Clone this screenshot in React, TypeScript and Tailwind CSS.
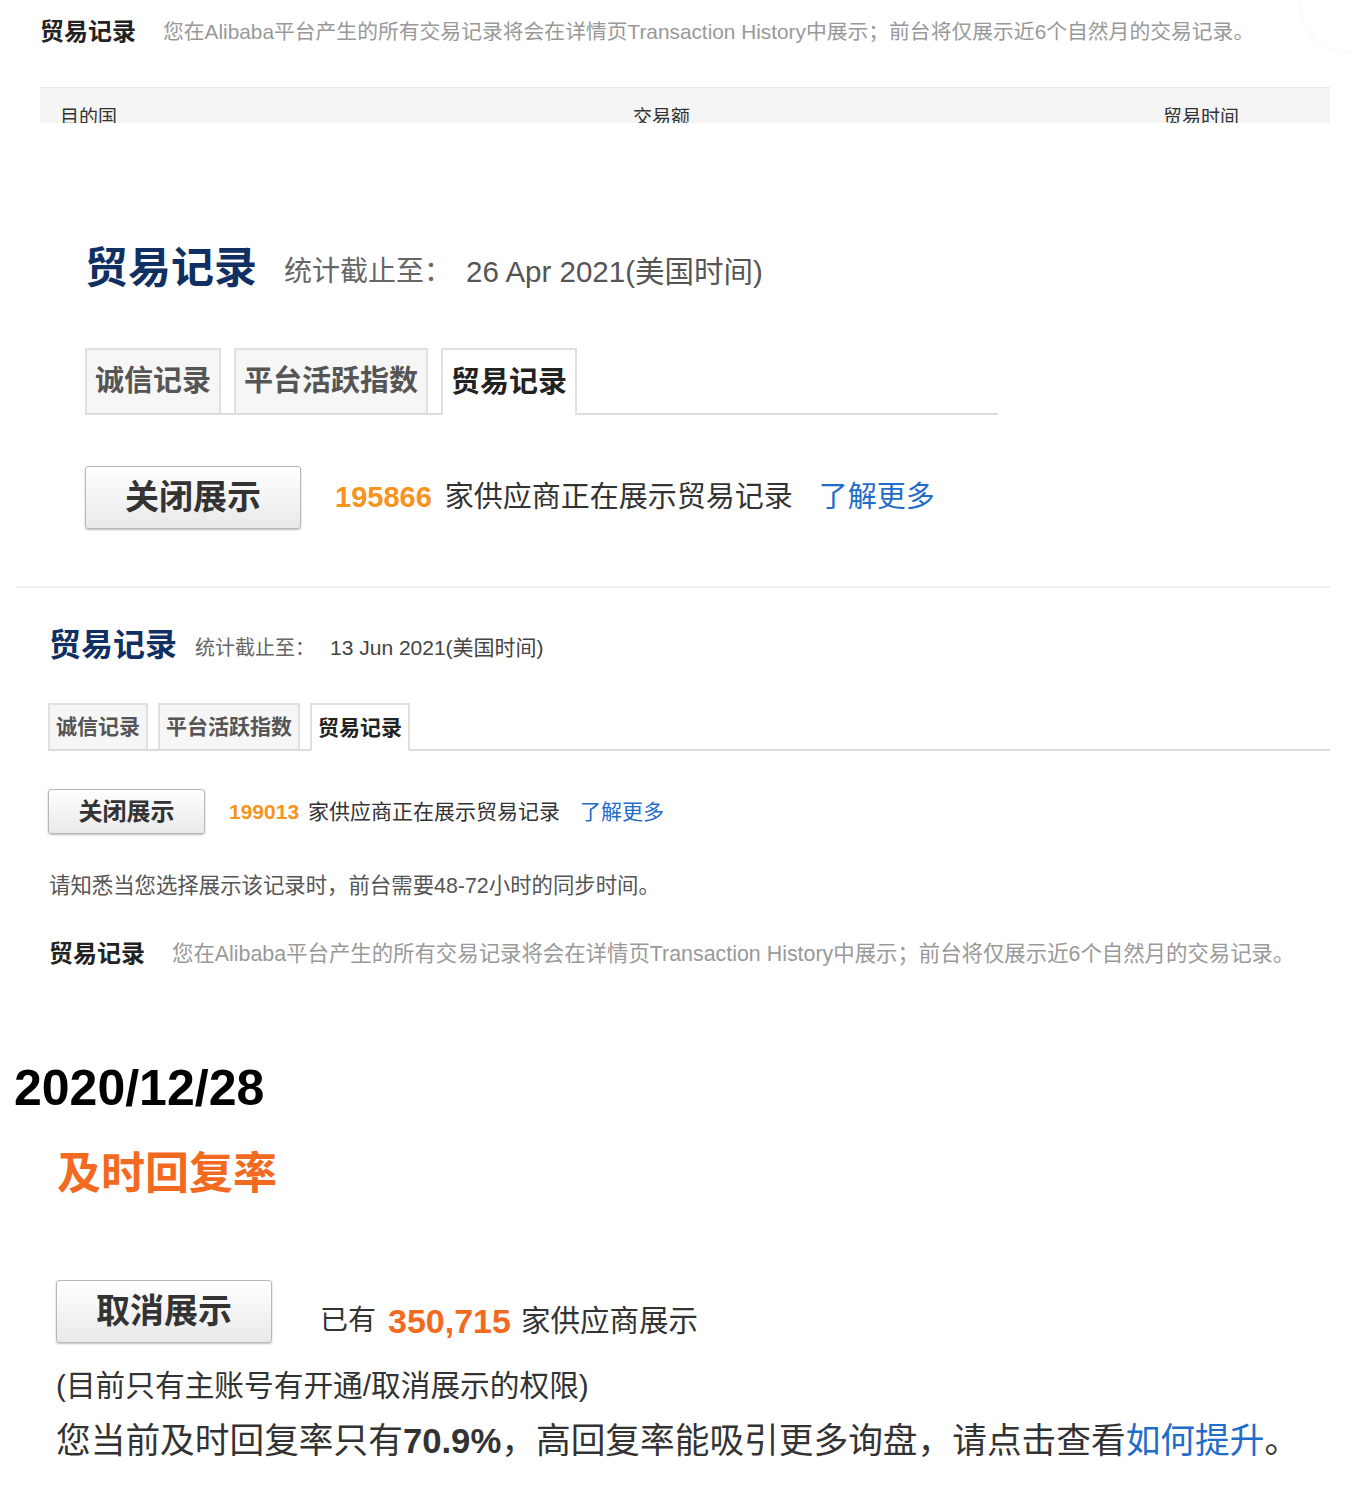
import React from "react";

const FONT = "font-['Liberation_Sans','Noto_Sans_CJK_SC',sans-serif]";

function Tabs({ big }: { big: boolean }) {
  const tabBase = big
    ? "h-[65px] px-[8px] text-[29px] border-2 border-b-0"
    : "h-[46px] px-[6px] text-[21px] border-2 border-b-0";
  return (
    <div
      className={`flex items-end border-b-2 border-[#dcdcdc] ${
        big ? "gap-[13px] w-[913px]" : "gap-[10px] w-[1282px]"
      }`}
    >
      <div className={`${tabBase} flex items-center bg-[#f6f6f6] border-[#e0e0e0] text-[#555] font-bold`}>诚信记录</div>
      <div className={`${tabBase} flex items-center bg-[#f6f6f6] border-[#e0e0e0] text-[#555] font-bold`}>平台活跃指数</div>
      <div
        className={`${tabBase} flex items-center bg-white border-[#e0e0e0] text-[#222] font-bold -mb-[2px] ${
          big ? "h-[67px]" : "h-[48px]"
        }`}
      >
        贸易记录
      </div>
    </div>
  );
}

function Btn({ label, big }: { label: string; big: boolean }) {
  return (
    <div
      className={`flex items-center justify-center rounded-[3px] border border-[#b8b8b8] bg-gradient-to-b from-white to-[#e9e9e9] shadow-[0_1px_2px_rgba(0,0,0,0.25)] font-bold text-[#333] ${
        big ? "w-[216px] h-[63px] text-[34px]" : "w-[157px] h-[45px] text-[24px]"
      }`}
    >
      {label}
    </div>
  );
}

export default function App() {
  return (
    <div className={`${FONT} relative min-h-[1491px] w-[1352px] bg-white overflow-hidden`}>
      <div className="absolute -right-[40px] -top-[40px] w-[90px] h-[90px] rounded-full bg-white shadow-[0_0_6px_rgba(0,0,0,0.05)]" />

      {/* Section 1 */}
      <div className="pl-[40px] pt-[17px]">
        <div className="flex items-center h-[30px]">
          <span className="text-[24px] font-bold text-[#222] leading-[30px]">贸易记录</span>
          <span className="ml-[27px] text-[20.8px] text-[#999] leading-[30px] whitespace-nowrap">
            您在Alibaba平台产生的所有交易记录将会在详情页Transaction History中展示；前台将仅展示近6个自然月的交易记录。
          </span>
        </div>
        <div className="mt-[40px] w-[1290px] h-[36px] overflow-hidden bg-[#f5f5f5] border-t border-[#ececec] flex text-[19px] text-[#333] leading-[20px] pt-[20px] pl-[20px]">
          <div className="w-[573px]">目的国</div>
          <div className="w-[530px]">交易额</div>
          <div>贸易时间</div>
        </div>
      </div>

      {/* Section 2 */}
      <div className="pl-[85px] mt-[120px]">
        <div className="flex items-center h-[50px]">
          <span className="text-[43px] font-bold text-[#102f62] leading-[50px]">贸易记录</span>
          <span className="ml-[27px] mt-[8px] text-[28px] text-[#666] leading-[50px]">统计截止至：</span>
          <span className="ml-[14px] mt-[8px] text-[29.5px] text-[#555] leading-[50px]">26 Apr 2021(美国时间)</span>
        </div>
        <div className="mt-[55px]">
          <Tabs big={true} />
        </div>
        <div className="mt-[51px] flex items-center">
          <Btn label="关闭展示" big={true} />
          <span className="ml-[34px] text-[29px] font-bold text-[#f7941d]">195866</span>
          <span className="ml-[13px] text-[29px] text-[#333]">家供应商正在展示贸易记录</span>
          <span className="ml-[26px] text-[29px] text-[#1f6cc9]">了解更多</span>
        </div>
      </div>

      <div className="ml-[16px] mt-[57px] w-[1314px] h-[2px] bg-[#f1f1f1]" />

      {/* Section 3 */}
      <div className="pl-[48px] mt-[37px]">
        <div className="flex items-center h-[40px]">
          <span className="text-[32px] font-bold text-[#102f62] leading-[40px] ml-[1px]">贸易记录</span>
          <span className="ml-[18px] mt-[6px] text-[20px] text-[#666] leading-[40px]">统计截止至：</span>
          <span className="ml-[15px] mt-[6px] text-[21px] text-[#444] leading-[40px]">13 Jun 2021(美国时间)</span>
        </div>
        <div className="mt-[38px]">
          <Tabs big={false} />
        </div>
        <div className="mt-[38px] flex items-center">
          <Btn label="关闭展示" big={false} />
          <span className="ml-[24px] text-[21px] font-bold text-[#f7941d]">199013</span>
          <span className="ml-[9px] text-[21px] text-[#333]">家供应商正在展示贸易记录</span>
          <span className="ml-[20px] text-[21px] text-[#1f6cc9]">了解更多</span>
        </div>
        <div className="mt-[37px] h-[30px] leading-[30px] text-[21.4px] text-[#555] ml-[1px]">
          请知悉当您选择展示该记录时，前台需要48-72小时的同步时间。
        </div>
        <div className="mt-[38px] flex items-center h-[30px] ml-[1px]">
          <span className="text-[24px] font-bold text-[#222] leading-[30px]">贸易记录</span>
          <span className="ml-[27px] text-[21.4px] text-[#999] leading-[30px] whitespace-nowrap">
            您在Alibaba平台产生的所有交易记录将会在详情页Transaction History中展示；前台将仅展示近6个自然月的交易记录。
          </span>
        </div>
      </div>

      {/* Section 4 */}
      <div className="mt-[91px] pl-[14px] h-[56px] leading-[56px] text-[50px] font-bold text-black">
        2020/12/28
      </div>
      <div className="pl-[57px] mt-[30px] h-[56px] leading-[56px] text-[44px] font-bold text-[#f26a1f]">
        及时回复率
      </div>
      <div className="pl-[56px] mt-[78px] flex items-start">
        <Btn label="取消展示" big={true} />
        <div className="ml-[48px] mt-[21px] h-[40px] leading-[40px] flex items-center">
          <span className="text-[28px] text-[#333]">已有</span>
          <span className="ml-[12px] text-[34px] font-bold text-[#f26a1f]">350,715</span>
          <span className="ml-[10px] text-[29.5px] text-[#333]">家供应商展示</span>
        </div>
      </div>
      <div className="pl-[56px] mt-[23px] h-[40px] leading-[40px] text-[29.7px] text-[#333]">
        (目前只有主账号有开通/取消展示的权限)
      </div>
      <div className="pl-[56px] mt-[13px] h-[44px] leading-[44px] text-[34.7px] text-[#333] whitespace-nowrap">
        您当前及时回复率只有<span className="font-bold">70.9%</span>，高回复率能吸引更多询盘，请点击查看
        <span className="text-[#1f6cc9]">如何提升</span>。
      </div>
    </div>
  );
}
